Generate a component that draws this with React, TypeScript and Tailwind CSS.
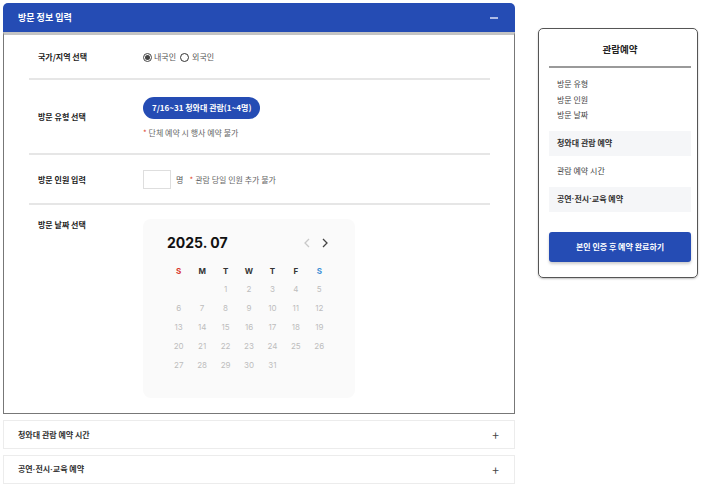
import React from "react";

const F = { fontFamily: '"Noto Sans CJK KR", "Noto Sans", sans-serif' };
const Dot = () => <span style={{ fontFamily: '"Liberation Sans", sans-serif' }}>·</span>;

function Row({ label, children, className }: { label: string; children: React.ReactNode; className: string }) {
  return (
    <div className={`flex ${className}`}>
      <div className="w-[114px] pl-[9px] shrink-0 text-[8px] font-bold text-[#222]">{label}</div>
      <div className="flex-1">{children}</div>
    </div>
  );
}

const days: (number | null)[] = [null, null, ...Array.from({ length: 31 }, (_, i) => i + 1)];

export default function App() {
  return (
    <div className="w-[703px] h-[489px] bg-white flex" style={F}>
      <div className="ml-[3px] mt-[3px] w-[512px] flex flex-col">
        {/* header */}
        <div className="h-[29px] bg-[#254cb4] rounded-t-[5px] flex items-center justify-between pl-[15px] pr-[17px]">
          <span className="text-white text-[9px] font-bold">방문 정보 입력</span>
          <span className="w-[8px] h-[2px] bg-[#aebbe6]" />
        </div>
        {/* body */}
        <div className="h-[382px] border-t-[3px] border-t-[#c4c4c4] border-x border-b border-x-[#777] border-b-[#777] pl-[25px] pr-[24px] flex flex-col">
          <Row label="국가/지역 선택" className="h-[45px] pt-[1px] items-center border-b-2 border-[#e6e6e6]">
            <div className="flex items-center text-[8px] text-[#555]">
              <span className="w-[9px] h-[9px] rounded-full border border-[#444] flex items-center justify-center">
                <span className="w-[5px] h-[5px] rounded-full bg-[#444]" />
              </span>
              <span className="ml-[2px]">내국인</span>
              <span className="ml-[4px] w-[9px] h-[9px] rounded-full border-[1.5px] border-[#333]" />
              <span className="ml-[3px]">외국인</span>
            </div>
          </Row>
          <Row label="방문 유형 선택" className="h-[75px] items-center border-b-2 border-[#e6e6e6]">
            <div className="flex flex-col items-start pt-[2px]">
              <span className="h-[22px] px-[9px] rounded-full bg-[#254cb4] text-white text-[8px] font-bold flex items-center">
                7/16~31 청와대 관람(1~4명)
              </span>
              <span className="mt-[8px] text-[8px] text-[#666]">
                <span className="text-[#e0452f]">*</span> 단체 예약 시 행사 예약 불가
              </span>
            </div>
          </Row>
          <Row label="방문 인원 입력" className="h-[50px] pt-[1px] items-center border-b-2 border-[#e6e6e6]">
            <div className="flex items-center text-[8px] text-[#555]">
              <span className="w-[28px] h-[19px] border border-[#dedede] bg-white" />
              <span className="ml-[5px]">명</span>
              <span className="ml-[6px] text-[#e0452f]">*</span>
              <span className="ml-[2px] text-[#666]">관람 당일 인원 추가 불가</span>
            </div>
          </Row>
          <Row label="방문 날짜 선택" className="pt-[14px] items-start">
            <div className="w-[212px] h-[179px] bg-[#fafafa] rounded-[8px] px-[24px] pt-[16px] flex flex-col">
              <div className="flex items-center justify-between">
                <span className="text-[14px] font-bold text-[#111] leading-[16px]" style={{ fontFamily: 'Inter, "Noto Sans", sans-serif' }}>2025. 07</span>
                <div className="flex items-center gap-[10px] mr-[2px]">
                  <svg width="8" height="10" viewBox="0 0 8 10"><path d="M6 1 L2 5 L6 9" fill="none" stroke="#c8c8c8" strokeWidth="1.3" /></svg>
                  <svg width="8" height="10" viewBox="0 0 8 10"><path d="M2 1 L6 5 L2 9" fill="none" stroke="#444" strokeWidth="1.3" /></svg>
                </div>
              </div>
              <div className="grid grid-cols-7 mt-[11px] text-[8px] text-center" style={{ fontFamily: 'Inter, "Noto Sans", sans-serif' }}>
                {["S", "M", "T", "W", "T", "F", "S"].map((d, i) => (
                  <span key={i} className={`h-[18px] leading-[18px] font-bold ${i === 0 ? "text-[#d9342b]" : i === 6 ? "text-[#3a8fd6]" : "text-[#333]"}`}>{d}</span>
                ))}
                {days.map((d, i) => (
                  <span key={i} className="h-[19px] leading-[19px] text-[#bdbdbd]">{d ?? ""}</span>
                ))}
              </div>
            </div>
          </Row>
        </div>
        {/* accordions */}
        <div className="mt-[6px] h-[29px] border border-[#ececec] flex items-center justify-between pl-[14px] pr-[15px]">
          <span className="text-[8px] font-bold text-[#333]">청와대 관람 예약 시간</span>
          <span className="text-[12px] text-[#444] leading-none">+</span>
        </div>
        <div className="mt-[6px] h-[29px] border border-[#ececec] flex items-center justify-between pl-[14px] pr-[15px]">
          <span className="text-[8px] font-bold text-[#333]">공연<Dot />전시<Dot />교육 예약</span>
          <span className="text-[12px] text-[#444] leading-none">+</span>
        </div>
      </div>
      {/* right panel */}
      <div className="ml-[23px] mt-[28px] w-[160px] h-[250px] border border-[#555] rounded-[5px] pl-[10px] pr-[6px] flex flex-col shadow-[0_1px_2px_rgba(0,0,0,0.25)]">
        <div className="h-[39px] flex items-end justify-center pb-[6px] border-b-2 border-[#9a9a9a]">
          <span className="text-[9.5px] font-bold text-[#222] mb-[4px]">관람예약</span>
        </div>
        <div className="pl-[8px] pt-[8px] flex flex-col text-[8px] text-[#444] leading-[15.5px]">
          <span>방문 유형</span>
          <span>방문 인원</span>
          <span>방문 날짜</span>
        </div>
        <div className="mt-[8px] h-[25px] bg-[#f5f6f8] pl-[8px] flex items-center text-[8px] font-bold text-[#333]">청와대 관람 예약</div>
        <div className="h-[31px] pl-[8px] flex items-center text-[8px] text-[#444]">관람 예약 시간</div>
        <div className="h-[25px] bg-[#f5f6f8] pl-[8px] flex items-center text-[8px] font-bold text-[#333]">공연<Dot />전시<Dot />교육 예약</div>
        <div className="mt-[20px] h-[30px] bg-[#254cb4] rounded-[3px] flex items-center justify-center text-white text-[8px] font-bold shadow-[0_2px_3px_rgba(0,0,0,0.2)]">
          본인 인증 후 예약 완료하기
        </div>
      </div>
    </div>
  );
}
